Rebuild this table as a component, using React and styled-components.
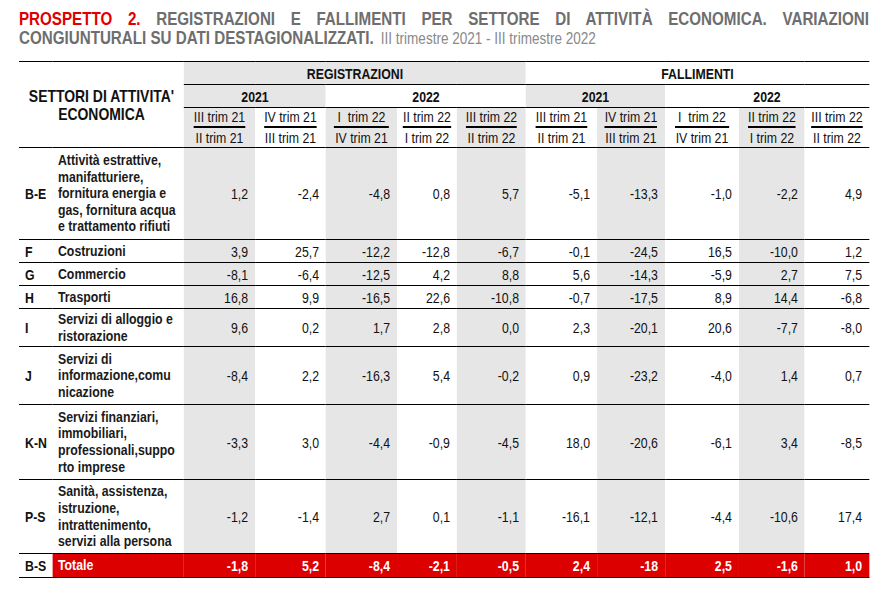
import React from 'react';
import styled, { createGlobalStyle } from 'styled-components';

// no Arial Narrow offline: draw with Liberation Sans and squeeze horizontally
const K = 0.82;
const n = (v) => `${(v / K).toFixed(2)}px`;

const GlobalStyle = createGlobalStyle`
  body {
    margin: 0;
    background: #fff;
    font-family: "Liberation Sans", Arial, sans-serif;
    color: #111;
  }
`;

const Page = styled.div`
  width: 888px;
  height: 595px;
  padding: 9px 0 0 19px;
  box-sizing: border-box;
  overflow: hidden;
`;

const Condensed = styled.div`
  width: ${n(850)};
  transform: scaleX(${K});
  transform-origin: 0 0;
`;

const Title = styled.div`
  font-size: 18.5px;
  line-height: 19px;
  font-weight: bold;
  color: #6e6e6e;
  margin-bottom: 13px;
`;

const TitleLine = styled.div`
  text-align: ${(p) => (p.$justify ? 'justify' : 'left')};
  text-align-last: ${(p) => (p.$justify ? 'justify' : 'left')};
  white-space: nowrap;
`;

const Red = styled.span`
  color: #e00000;
`;

const Period = styled.span`
  font-weight: normal;
  font-size: 16.5px;
  color: #8a8a8a;
  margin-left: ${n(7)};
`;

const Table = styled.table`
  width: 100%;
  table-layout: fixed;
  border-collapse: collapse;
  font-size: 15px;
`;

const Col = styled.col`
  width: ${(p) => n(p.$w)};
`;

const HeadCell = styled.th`
  height: 22px;
  padding: 0;
  font-weight: bold;
  font-size: 15px;
  text-align: center;
  vertical-align: middle;
  background: ${(p) => (p.$shade ? '#e6e6e6' : '#fff')};
  border-top: ${(p) => (p.$top ? '1px solid #000' : 'none')};
  border-bottom: 1px solid #000;
`;

const SectorHead = styled.th`
  padding: 2px 0 0 0;
  font-size: 17px;
  line-height: 18px;
  font-weight: bold;
  text-align: center;
  vertical-align: middle;
  border-top: 1px solid #000;
  border-bottom: 1px solid #000;
`;

const TrimCell = styled.th`
  height: 38px;
  padding: 0 0 1px;
  font-weight: normal;
  text-align: center;
  vertical-align: middle;
  background: ${(p) => (p.$shade ? '#e6e6e6' : '#fff')};
  border-bottom: 1px solid #000;
`;

const Frac = styled.span`
  display: inline-flex;
  flex-direction: column;
  align-items: center;
  line-height: 16px;
  white-space: pre;
`;

const Over = styled.span`
  border-bottom: 2px solid #000;
  padding-bottom: 1px;
  margin-bottom: 2px;
`;

const Row = styled.tr`
  height: ${(p) => p.$h}px;
`;

const CodeCell = styled.td`
  padding: 0 0 0 ${n(6)};
  font-weight: bold;
  vertical-align: middle;
  background: #fff;
  border-bottom: 1px solid #000;
`;

const LabelCell = styled.td`
  padding: 0 0 0 ${n(5)};
  font-weight: bold;
  line-height: 16.6px;
  vertical-align: middle;
  white-space: nowrap;
  color: ${(p) => (p.$total ? '#fff' : '#1a1a1a')};
  background: ${(p) => (p.$total ? '#dd0000' : '#fff')};
  border-bottom: 1px solid #000;
`;

const NumCell = styled.td`
  padding: 0 ${n(7)} 0 0;
  text-align: right;
  vertical-align: middle;
  color: ${(p) => (p.$total ? '#fff' : '#111')};
  font-weight: ${(p) => (p.$total ? 'bold' : 'normal')};
  background: ${(p) => (p.$total ? '#dd0000' : p.$shade ? '#e6e6e6' : '#fff')};
  border-bottom: 1px solid #000;
`;

const cols = [
  { w: 71, shade: true, top: 'III trim 21', bottom: 'II trim 21' },
  { w: 71, shade: false, top: 'IV trim 21', bottom: 'III trim 21' },
  { w: 71, shade: true, top: ' I  trim 22 ', bottom: 'IV trim 21' },
  { w: 60, shade: false, top: 'II trim 22', bottom: 'I trim 22' },
  { w: 69, shade: true, top: 'III trim 22', bottom: 'II trim 22' },
  { w: 71, shade: false, top: 'III trim 21', bottom: 'II trim 21' },
  { w: 68, shade: true, top: 'IV trim 21', bottom: 'III trim 21' },
  { w: 74, shade: false, top: ' I  trim 22 ', bottom: 'IV trim 21' },
  { w: 66, shade: true, top: 'II trim 22', bottom: 'I trim 22' },
  { w: 64, shade: false, top: 'III trim 22', bottom: 'II trim 22' },
];

const rows = [
  {
    code: 'B-E',
    h: 92,
    label: ['Attività estrattive,', 'manifatturiere,', 'fornitura energia e', 'gas, fornitura acqua', 'e trattamento rifiuti'],
    values: ['1,2', '-2,4', '-4,8', '0,8', '5,7', '-5,1', '-13,3', '-1,0', '-2,2', '4,9'],
  },
  { code: 'F', h: 23, label: ['Costruzioni'], values: ['3,9', '25,7', '-12,2', '-12,8', '-6,7', '-0,1', '-24,5', '16,5', '-10,0', '1,2'] },
  { code: 'G', h: 23, label: ['Commercio'], values: ['-8,1', '-6,4', '-12,5', '4,2', '8,8', '5,6', '-14,3', '-5,9', '2,7', '7,5'] },
  { code: 'H', h: 23, label: ['Trasporti'], values: ['16,8', '9,9', '-16,5', '22,6', '-10,8', '-0,7', '-17,5', '8,9', '14,4', '-6,8'] },
  {
    code: 'I',
    h: 38,
    label: ['Servizi di alloggio  e', 'ristorazione'],
    values: ['9,6', '0,2', '1,7', '2,8', '0,0', '2,3', '-20,1', '20,6', '-7,7', '-8,0'],
  },
  {
    code: 'J',
    h: 58,
    label: ['Servizi di', 'informazione,comu', 'nicazione'],
    values: ['-8,4', '2,2', '-16,3', '5,4', '-0,2', '0,9', '-23,2', '-4,0', '1,4', '0,7'],
  },
  {
    code: 'K-N',
    h: 75,
    label: ['Servizi finanziari,', 'immobiliari,', 'professionali,suppo', 'rto imprese'],
    values: ['-3,3', '3,0', '-4,4', '-0,9', '-4,5', '18,0', '-20,6', '-6,1', '3,4', '-8,5'],
  },
  {
    code: 'P-S',
    h: 74,
    label: ['Sanità, assistenza,', 'istruzione,', 'intrattenimento,', 'servizi alla persona'],
    values: ['-1,2', '-1,4', '2,7', '0,1', '-1,1', '-16,1', '-12,1', '-4,4', '-10,6', '17,4'],
  },
];

const total = ['-1,8', '5,2', '-8,4', '-2,1', '-0,5', '2,4', '-18', '2,5', '-1,6', '1,0'];

const Label = ({ lines }) =>
  lines.map((l, i) => (
    <React.Fragment key={i}>
      {i > 0 && <br />}
      {l}
    </React.Fragment>
  ));

export default function App() {
  return (
    <Page>
      <GlobalStyle />
      <Condensed>
        <Title>
          <TitleLine $justify>
            <Red>PROSPETTO 2.</Red> REGISTRAZIONI E FALLIMENTI PER SETTORE DI ATTIVITÀ ECONOMICA. VARIAZIONI
          </TitleLine>
          <TitleLine>
            CONGIUNTURALI SU DATI DESTAGIONALIZZATI.<Period>III trimestre 2021 - III trimestre 2022</Period>
          </TitleLine>
        </Title>
        <Table>
          <colgroup>
            <Col $w={34} />
            <Col $w={131} />
            {cols.map((c, i) => (
              <Col key={i} $w={c.w} />
            ))}
          </colgroup>
          <thead>
            <tr>
              <SectorHead colSpan={2} rowSpan={3}>
                SETTORI DI ATTIVITA'
                <br />
                ECONOMICA
              </SectorHead>
              <HeadCell colSpan={5} $shade $top>
                REGISTRAZIONI
              </HeadCell>
              <HeadCell colSpan={5} $top>
                FALLIMENTI
              </HeadCell>
            </tr>
            <tr>
              <HeadCell colSpan={2} $shade>2021</HeadCell>
              <HeadCell colSpan={3}>2022</HeadCell>
              <HeadCell colSpan={2} $shade>2021</HeadCell>
              <HeadCell colSpan={3}>2022</HeadCell>
            </tr>
            <tr>
              {cols.map((c, i) => (
                <TrimCell key={i} $shade={c.shade}>
                  <Frac>
                    <Over>{c.top}</Over>
                    <span>{c.bottom}</span>
                  </Frac>
                </TrimCell>
              ))}
            </tr>
          </thead>
          <tbody>
            {rows.map((r) => (
              <Row key={r.code} $h={r.h}>
                <CodeCell>{r.code}</CodeCell>
                <LabelCell>
                  <Label lines={r.label} />
                </LabelCell>
                {r.values.map((v, i) => (
                  <NumCell key={i} $shade={cols[i].shade}>
                    {v}
                  </NumCell>
                ))}
              </Row>
            ))}
            <Row $h={24}>
              <CodeCell>B-S</CodeCell>
              <LabelCell $total>Totale</LabelCell>
              {total.map((v, i) => (
                <NumCell key={i} $total>
                  {v}
                </NumCell>
              ))}
            </Row>
          </tbody>
        </Table>
      </Condensed>
    </Page>
  );
}
